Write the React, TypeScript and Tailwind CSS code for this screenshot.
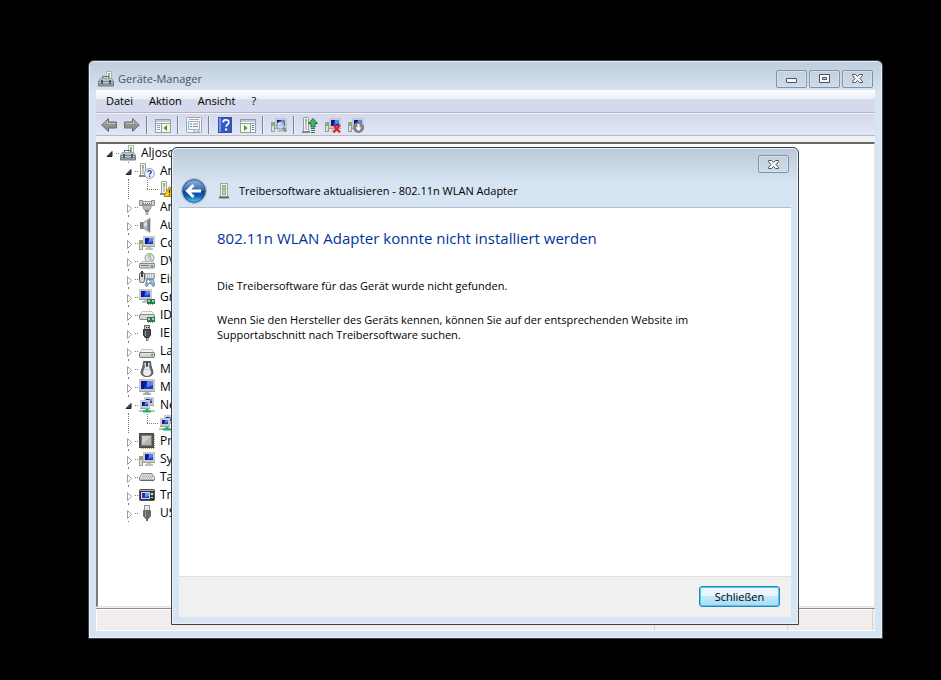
import type { ReactNode } from 'react';

type IconProps = { size?: number };
type IconComponent = (props: IconProps) => ReactNode;

function Icon({ size = 16, children }: { size?: number; children: ReactNode }) {
  return (
    <svg width={size} height={size} viewBox="0 0 16 16" className="shrink-0" aria-hidden="true">
      {children}
    </svg>
  );
}

/* ---------- shared icon parts ---------- */

function Tower({ x = 0, y = 0, h = 13 }: { x?: number; y?: number; h?: number }) {
  return (
    <g>
      <rect x={x + 1.5} y={y + 0.5} width="5" height={h - 1} rx="0.5" fill="#f4f4f1" stroke="#9c9e9a" />
      <rect x={x + 3} y={y + 2} width="2" height={h - 4} fill="#c3c7bf" />
      <rect x={x + 3} y={y + 2} width="2" height="3" fill="#84c46d" />
      <rect x={x} y={y + h - 1} width="8" height="2" fill="#85888a" />
    </g>
  );
}

function Screen({ x, y, w, h, frame = 1 }: { x: number; y: number; w: number; h: number; frame?: number }) {
  const left = x + frame;
  const top = y + frame;
  const iw = w - frame * 2;
  const ih = h - frame * 2 - 1;
  return (
    <g>
      <rect x={x} y={y} width={w} height={h} fill="#c9cac6" />
      <rect x={left} y={top} width={iw} height={ih} fill="#1a3fd0" />
      <path d={`M${left} ${top}h${iw / 2}l${-iw / 4} ${ih}h${-iw / 4}z`} fill="#0b1a9c" />
      <path d={`M${left + iw / 2} ${top}h${iw / 2}v${ih / 2}l${-iw / 2} ${ih / 4}z`} fill="#5c86ee" />
      <path d={`M${x} ${y + h - 0.5}h${w}`} stroke="#a1a29d" />
    </g>
  );
}

function SmallPc() {
  return (
    <g>
      <rect x="0.5" y="5.5" width="3" height="9" fill="#dfe0dc" stroke="#999c98" />
      <rect x="1" y="6" width="2" height="3" fill="#6cc550" />
      <Screen x={4} y={1} w={12} h={11} frame={2} />
      <path d="M8 12h4v1h2v2H6v-2h2z" fill="#c2c3bf" />
    </g>
  );
}

/* ---------- tree icons ---------- */

const ToolboxIcon: IconComponent = ({ size }) => (
  <Icon size={size}>
    <rect x="8.500" y="0.500" width="5" height="9" fill="#f7f7f4" stroke="#b1b3ae" />
    <rect x="10" y="2" width="2" height="5" fill="#7fc666" />
    <path d="M4.500 7V5.500h6V7" fill="none" stroke="#62686d" />
    <path d="M2 7.500h12l1.500 3H0.500z" fill="#b9c3ca" stroke="#87919a" strokeWidth="0.700" />
    <path d="M0.500 10.500h15v4.500h-15z" fill="#8d989f" stroke="#727c83" />
    <path d="M1 11.500h14" stroke="#ccd3d8" />
    <path d="M3 9h2v4H3zM11 9h2v4h-2z" fill="#4f5a62" />
  </Icon>
);

const UnknownIcon: IconComponent = ({ size }) => (
  <Icon size={size}>
    <Tower x={0} y={0} h={13} />
    <circle cx="10.500" cy="10.500" r="4.900" fill="#f2f7ff" stroke="#8795ad" />
    <path d="M8.800 9.300c0-2.300 3.500-2.200 3.500-.2 0 1.200-1.600 1.300-1.700 2.600" fill="none" stroke="#1d46b6" strokeWidth="1.300" />
    <rect x="10" y="12.500" width="1.400" height="1.400" fill="#1d46b6" />
  </Icon>
);

const WarningIcon: IconComponent = ({ size }) => (
  <Icon size={size}>
    <Tower x={1} y={0} h={13} />
    <path d="M10.500 5.500l5.500 10H5z" fill="#ffd824" stroke="#b48908" strokeLinejoin="round" />
    <path d="M10.500 8.500v3.500M10.500 13v1.500" stroke="#413300" strokeWidth="1.400" />
  </Icon>
);

const PortIcon: IconComponent = ({ size }) => (
  <Icon size={size}>
    <path d="M2.500 2.500h11v3h-11z" fill="#e8ebed" stroke="#8e959b" />
    <path d="M0.500 1.500h3v5h-3zM12.500 1.500h3v5h-3z" fill="#cdd2d6" stroke="#858c92" />
    <path d="M4 4.500h8" stroke="#6b7278" strokeDasharray="1 1" />
    <path d="M4 6.500h8v2L10.500 11h-5L4 8.500z" fill="#b7bfc4" stroke="#7c848a" strokeWidth="0.800" />
    <rect x="6" y="11" width="4" height="2" fill="#7b848b" />
    <rect x="6.500" y="13" width="3" height="3" fill="#aab0b5" />
  </Icon>
);

const SpeakerIcon: IconComponent = ({ size }) => (
  <Icon size={size}>
    <path d="M1.500 5.500h3v6h-3z" fill="#83888c" stroke="#74797e" />
    <path d="M4.500 5.500L11 1v14.500l-6.500-4z" fill="#b3b8bc" stroke="#94999d" strokeWidth="0.800" />
    <path d="M8.500 4L11 2v13l-2.500-2.500z" fill="#777d82" />
    <path d="M5 6.500l3-2v4l-3 1z" fill="#dde1e4" />
  </Icon>
);

const ComputerIcon: IconComponent = ({ size }) => (
  <Icon size={size}>
    <SmallPc />
  </Icon>
);

const DiscIcon: IconComponent = ({ size }) => (
  <Icon size={size}>
    <circle cx="10.500" cy="5" r="4.500" fill="#e3e8e6" stroke="#929996" />
    <path d="M10.500 5L8 1.500a4 4 0 015 0z" fill="#98d59a" />
    <path d="M10.500 5l3.500 1.500a4 4 0 01-3 2.500z" fill="#d7b6dd" />
    <circle cx="10.500" cy="5" r="1.300" fill="#fff" stroke="#868c8a" strokeWidth="0.700" />
    <path d="M3 8.500h11l1.500 2.500H0.500z" fill="#f0f1f0" stroke="#9a9d9b" strokeWidth="0.700" />
    <rect x="0.500" y="10.500" width="15" height="4.500" rx="1" fill="#cfd2d0" stroke="#838785" />
    <path d="M2 12.500h8" stroke="#777" />
    <rect x="12" y="12" width="2" height="2" fill="#43b52d" />
  </Icon>
);

const InputIcon: IconComponent = ({ size }) => (
  <Icon size={size}>
    <path d="M5 2.500h10.500v5H5z" fill="#e6e8ea" stroke="#9aa0a6" />
    <path d="M6 4h9M6 6h9" stroke="#6c737a" strokeWidth="0.700" strokeDasharray="1 1" />
    <rect x="0.500" y="1.500" width="5" height="10" rx="2" fill="#d6d9db" stroke="#596066" />
    <path d="M3 0v6" stroke="#3d444a" strokeWidth="2" />
    <path d="M7.500 8.500h7l1 6-1.500 1-2-3h-2l-2 3-1.500-1z" fill="#8eb4d4" stroke="#55728b" strokeWidth="0.800" />
    <path d="M8 10.500h3M9.500 9v3M13 10.500h1" stroke="#fff" strokeWidth="0.900" />
  </Icon>
);

const GraphicsIcon: IconComponent = ({ size }) => (
  <Icon size={size}>
    <Screen x={0} y={0} w={13} h={11} frame={2} />
    <path d="M5 11h4v1h2v2H3v-2h2z" fill="#c2c3bf" />
    <rect x="8" y="10" width="8" height="5" fill="#267b52" />
    <path d="M9 11h2v2H9zM13 11h2v2h-2z" fill="#a0d4b4" />
    <path d="M9 15.500h6" stroke="#b99c3a" strokeDasharray="1 1" />
  </Icon>
);

const IdeIcon: IconComponent = ({ size }) => (
  <Icon size={size}>
    <path d="M3 4.500h10l2.500 4H0.500z" fill="#f4f5f4" stroke="#b5b8b6" strokeWidth="0.800" />
    <rect x="0.500" y="7.500" width="15" height="5" rx="1.500" fill="#d6d8d7" stroke="#858987" />
    <rect x="8" y="10" width="8" height="5" fill="#267b52" />
    <path d="M9 11h2v2H9zM13 11h2v2h-2z" fill="#a0d4b4" />
    <path d="M9 15.500h6" stroke="#b99c3a" strokeDasharray="1 1" />
  </Icon>
);

const FirewireIcon: IconComponent = ({ size }) => (
  <Icon size={size}>
    <rect x="5.500" y="0.500" width="5" height="4" fill="#c3c5c7" stroke="#6b6d6f" />
    <path d="M7 2h1v1H7zM9 2h1v1H9z" fill="#222" />
    <path d="M4.500 4.500h7V10l-1.500 2.500H6L4.500 10z" fill="#4b4e50" stroke="#323537" />
    <path d="M6 6h1v5H6z" fill="#979b9e" />
    <path d="M7.500 13v3M9 13v3" stroke="#66696b" />
  </Icon>
);

const DriveIcon: IconComponent = ({ size }) => (
  <Icon size={size}>
    <path d="M3 6.500h10l2.500 3.500h-15z" fill="#f4f5f4" stroke="#b1b4b2" strokeWidth="0.800" />
    <rect x="0.500" y="9.500" width="15" height="5" rx="1.500" fill="#cfd1d0" stroke="#7b7f7d" />
    <path d="M2 11h12" stroke="#eee" />
    <rect x="12" y="11" width="2" height="2" fill="#43c22d" />
  </Icon>
);

const MouseIcon: IconComponent = ({ size }) => (
  <Icon size={size}>
    <path d="M4.500 0.500h7L12 5l2 6c0 3-2 4.500-6 4.500S2 14 2 11l2-6z" fill="#6a6e71" stroke="#55595c" />
    <path d="M5.500 2h5l-.5 4 2 5c0 2.500-1.500 4-4 4s-4-1.500-4-4l2-5z" fill="#e9ebec" />
    <rect x="7" y="1" width="2" height="5" rx="1" fill="#3b3f42" />
    <path d="M7 8.500h2" stroke="#b1b5b8" />
  </Icon>
);

const MonitorIcon: IconComponent = ({ size }) => (
  <Icon size={size}>
    <Screen x={0} y={0} w={16} h={13} frame={2} />
    <path d="M6 13h4v1h2v2H4v-2h2z" fill="#a9aca8" />
  </Icon>
);

const NetworkIcon: IconComponent = ({ size }) => (
  <Icon size={size}>
    <Screen x={5} y={0} w={10} h={9} frame={2} />
    <Screen x={1} y={3} w={10} h={9} frame={2} />
    <path d="M0 14h16" stroke="#b9c3bd" strokeWidth="2" />
    <path d="M6.500 12h3v1.500h2.500v2H4v-2h2.500z" fill="#12b175" />
  </Icon>
);

const ProcessorIcon: IconComponent = ({ size }) => (
  <Icon size={size}>
    <path d="M2 15.500h14M15.500 2v14" stroke="#c79d4a" strokeDasharray="1 1" />
    <rect x="0.500" y="0.500" width="14" height="14" fill="#525452" stroke="#4a4c4a" />
    <rect x="2.500" y="2.500" width="10" height="10" fill="#b4b6b4" stroke="#787b78" />
    <path d="M3 12V3h9z" fill="#cfd0ce" />
  </Icon>
);

const KeyboardIcon: IconComponent = ({ size }) => (
  <Icon size={size}>
    <path d="M3 4.500h10l2.500 4v2.500h-15V8.500z" fill="#e1e3e4" stroke="#868a8c" />
    <path d="M4 6h9M3 7.500h11M2 9h12" stroke="#8b8f92" strokeWidth="0.800" strokeDasharray="1 1" />
    <path d="M1 11.500h14" stroke="#64686a" />
  </Icon>
);

const PortableIcon: IconComponent = ({ size }) => (
  <Icon size={size}>
    <rect x="0.500" y="2.500" width="15" height="11" rx="1" fill="#2d3032" stroke="#505355" />
    <path d="M1 3.500h14" stroke="#b2b5b7" />
    <rect x="2.500" y="5.500" width="8" height="6" fill="#1534c4" stroke="#d8dcdd" />
    <path d="M6 6h4v3l-4 1.500z" fill="#6c95f1" />
    <circle cx="13" cy="7" r="1.300" fill="#d8dbdd" />
    <path d="M12 10.500h2" stroke="#d8dbdd" />
  </Icon>
);

const UsbIcon: IconComponent = ({ size }) => (
  <Icon size={size}>
    <rect x="5.500" y="0.500" width="5" height="5" fill="#e4e6e7" stroke="#909496" />
    <path d="M4.500 5.500h7V11l-2 2.500h-3l-2-2.500z" fill="#65696b" stroke="#6b6f71" />
    <path d="M6 6h1v6H6z" fill="#93979a" />
    <rect x="7" y="13" width="2" height="3" fill="#606466" />
  </Icon>
);

/* ---------- toolbar icons ---------- */

const BackArrowIcon: IconComponent = ({ size }) => (
  <Icon size={size}>
    <path d="M0.700 8L7.500 1.500v3.500H15.500v6H7.500v3.500z" fill="#919294" stroke="#68696b" strokeLinejoin="round" />
    <path d="M2.500 7.500l4-3.500v2.500h8" fill="none" stroke="#c3c4c6" />
  </Icon>
);

const ForwardArrowIcon: IconComponent = ({ size }) => (
  <Icon size={size}>
    <path d="M15.300 8L8.500 1.500v3.500H0.500v6H8.500v3.500z" fill="#919294" stroke="#707173" strokeLinejoin="round" />
    <path d="M1.500 6.500h8V4l4 3.500" fill="none" stroke="#c3c4c6" />
  </Icon>
);

const ConsoleTreeIcon: IconComponent = ({ size }) => (
  <Icon size={size}>
    <rect x="0.500" y="2.500" width="15" height="13" fill="#fbfbfb" stroke="#9a9ea4" />
    <path d="M1 4h14" stroke="#c5c9ce" strokeWidth="2" />
    <path d="M1 6.500h14M6.500 7v8" stroke="#9a9ea4" />
    <path d="M2 8.500h3M2 10.500h3M2 12.500h3" stroke="#7f9cc2" />
    <rect x="7" y="7" width="8" height="8" fill="#eef7ea" />
    <path d="M12 8v6l-3.500-3z" fill="#32a51f" />
  </Icon>
);

const PropertiesIcon: IconComponent = ({ size }) => (
  <Icon size={size}>
    <rect x="0.500" y="0.500" width="15" height="15" rx="1" fill="#fafafa" stroke="#a0a4aa" />
    <path d="M3 2.500h10" stroke="#a5abb3" />
    <path d="M2.500 4.500h11v8h-11z" fill="#f6f9fc" stroke="#a8aeb6" />
    <path d="M4 7h2M4 9.500h2" stroke="#16a0de" />
    <path d="M7 7h5M7 9.500h5" stroke="#848b94" />
    <path d="M7 14h3M11 14h3" stroke="#8f959d" />
  </Icon>
);

const HelpIcon: IconComponent = ({ size }) => (
  <Icon size={size}>
    <rect x="1.500" y="0.500" width="13" height="15" fill="#3059c7" stroke="#3450a0" />
    <path d="M3 1v14" stroke="#7797e6" strokeWidth="2" />
    <path d="M6.200 5.500c0-3.500 5.600-3.300 5.600-.2 0 2.200-2.600 2.200-2.700 4.500" fill="none" stroke="#fff" strokeWidth="1.800" />
    <rect x="8" y="11.500" width="2.200" height="2" fill="#fff" />
  </Icon>
);

const ActionPaneIcon: IconComponent = ({ size }) => (
  <Icon size={size}>
    <rect x="0.500" y="2.500" width="15" height="13" fill="#fbfbfb" stroke="#9a9ea4" />
    <path d="M1 4h14" stroke="#c5c9ce" strokeWidth="2" />
    <path d="M1 6.500h14M10.500 7v8" stroke="#9a9ea4" />
    <path d="M12 8.500h2M12 10.500h2M12 12.500h2" stroke="#3f719f" />
    <rect x="2" y="7" width="8" height="8" fill="#eef7ea" />
    <path d="M4 8v6l3.500-3z" fill="#32a51f" />
  </Icon>
);

const ScanIcon: IconComponent = ({ size }) => (
  <Icon size={size}>
    <SmallPc />
    <circle cx="9.500" cy="8.500" r="3.800" fill="#c4def4" fillOpacity="0.850" stroke="#8096ab" />
    <path d="M7.500 8a2 2 0 012-2" fill="none" stroke="#fff" />
    <path d="M12.300 11.300l3 3.200" stroke="#78828c" strokeWidth="2" />
  </Icon>
);

const UpdateDriverIcon: IconComponent = ({ size }) => (
  <Icon size={size}>
    <Tower x={0} y={0} h={15} />
    <path d="M11 1.500l4.500 5H13V10H9V6.500H6.500z" fill="#45b469" stroke="#176f36" strokeLinejoin="round" />
    <path d="M9 11.500h4M9 13.500h4M9 15.500h4" stroke="#248548" />
  </Icon>
);

const UninstallIcon: IconComponent = ({ size }) => (
  <Icon size={size}>
    <SmallPc />
    <path d="M8.500 8l6.500 7.500M15 8l-6.500 7.500" stroke="#e01b24" strokeWidth="2" />
  </Icon>
);

const DisableIcon: IconComponent = ({ size }) => (
  <Icon size={size}>
    <SmallPc />
    <circle cx="10.500" cy="10.500" r="5" fill="#85888b" stroke="#76797c" />
    <path d="M9.500 7h2v3.500h2l-3 3.500-3-3.500h2z" fill="#fff" />
  </Icon>
);

/* ---------- caption buttons ---------- */

const MinimizeGlyph = () => (
  <svg width="13" height="11" viewBox="0 0 13 11" aria-hidden="true">
    <rect x="1.500" y="5.500" width="10" height="4" rx="0.500" fill="#f8f8f8" stroke="#4e5260" />
  </svg>
);

const MaximizeGlyph = () => (
  <svg width="13" height="11" viewBox="0 0 13 11" aria-hidden="true">
    <path d="M1.500 1.500h10v8h-10zM4.500 4.500v2h4v-2z" fill="#f8f8f8" fillRule="evenodd" stroke="#4e5260" />
  </svg>
);

const CloseGlyph = () => (
  <svg width="13" height="11" viewBox="0 0 13 11" aria-hidden="true">
    <path
      d="M1.500 1.500h3L6.500 3.500l2-2h3v1L9 5.500l2.500 3v1h-3l-2-2-2 2h-3v-1L4 5.500l-2.500-3z"
      fill="#f8f8f8"
      stroke="#4e5260"
      strokeLinejoin="round"
    />
  </svg>
);

function CaptionButton({ label, children }: { label: string; children: ReactNode }) {
  return (
    <button
      type="button"
      aria-label={label}
      className="flex h-[18px] w-[31px] items-center justify-center rounded-xs border border-[#8391ad] bg-linear-to-b from-[#c4d1df] to-[#cddae8] shadow-[inset_0_0_0_1px_#d5e0eb]"
    >
      {children}
    </button>
  );
}

/* ---------- menu and toolbar ---------- */

const menus = ['Datei', 'Aktion', 'Ansicht', '?'];

type Tool = { label: string; icon: IconComponent };

const toolGroups: Tool[][] = [
  [
    { label: 'Zurück', icon: BackArrowIcon },
    { label: 'Vorwärts', icon: ForwardArrowIcon },
  ],
  [{ label: 'Konsolenstruktur', icon: ConsoleTreeIcon }],
  [{ label: 'Eigenschaften', icon: PropertiesIcon }],
  [
    { label: 'Hilfe', icon: HelpIcon },
    { label: 'Aktionsbereich', icon: ActionPaneIcon },
  ],
  [{ label: 'Nach geänderter Hardware suchen', icon: ScanIcon }],
  [
    { label: 'Treibersoftware aktualisieren', icon: UpdateDriverIcon },
    { label: 'Deinstallieren', icon: UninstallIcon },
    { label: 'Deaktivieren', icon: DisableIcon },
  ],
];

function Toolbar() {
  return (
    <div className="flex h-[22px] items-center border-b border-[#b3b8cf] bg-linear-to-b from-[#d3d8ec] to-[#e2e6f6] pl-px">
      {toolGroups.map((group, i) => (
        <div key={i} className="flex items-center">
          {i > 0 && <div className="mx-[3px] h-[18px] w-0.5 border-l border-[#7d8291] bg-[#eceffa]" />}
          {group.map(({ label, icon: ToolIcon }) => (
            <button key={label} type="button" aria-label={label} className="flex h-5 w-[23px] items-center justify-center">
              <ToolIcon />
            </button>
          ))}
        </div>
      ))}
    </div>
  );
}

/* ---------- device tree ---------- */

type Device = { name: string; icon: IconComponent; level: 0 | 1 | 2; open?: boolean };

const devices: Device[] = [
  { name: 'Aljosc', icon: ToolboxIcon, level: 0, open: true },
  { name: 'An', icon: UnknownIcon, level: 1, open: true },
  { name: '', icon: WarningIcon, level: 2 },
  { name: 'An', icon: PortIcon, level: 1 },
  { name: 'Au', icon: SpeakerIcon, level: 1 },
  { name: 'Co', icon: ComputerIcon, level: 1 },
  { name: 'DV', icon: DiscIcon, level: 1 },
  { name: 'Ein', icon: InputIcon, level: 1 },
  { name: 'Gr', icon: GraphicsIcon, level: 1 },
  { name: 'ID', icon: IdeIcon, level: 1 },
  { name: 'IEE', icon: FirewireIcon, level: 1 },
  { name: 'La', icon: DriveIcon, level: 1 },
  { name: 'Mä', icon: MouseIcon, level: 1 },
  { name: 'Mo', icon: MonitorIcon, level: 1 },
  { name: 'Ne', icon: NetworkIcon, level: 1, open: true },
  { name: '', icon: NetworkIcon, level: 2 },
  { name: 'Pr', icon: ProcessorIcon, level: 1 },
  { name: 'Sy', icon: ComputerIcon, level: 1 },
  { name: 'Ta', icon: KeyboardIcon, level: 1 },
  { name: 'Tr', icon: PortableIcon, level: 1 },
  { name: 'US', icon: UsbIcon, level: 1 },
];

// Dotted connector lines plus the expand arrow in front of an entry
function Guides({ level, open }: { level: Device['level']; open?: boolean }) {
  if (level === 2) {
    return (
      <svg width="38" height="18" className="shrink-0" aria-hidden="true">
        <path d="M7.500 0v18M26.500 0v9M26 9.500h11" fill="none" stroke="#777" strokeDasharray="1 1" />
      </svg>
    );
  }
  return (
    <svg width="18" height="18" className="shrink-0" aria-hidden="true">
      {level === 1 && <path d="M7.500 0v2M7.500 17v1" stroke="#777" strokeDasharray="1 1" />}
      <path d="M14 9.500h4" stroke="#777" strokeDasharray="1 1" />
      {open ? (
        <path d="M10 7.500v5H5z" fill="#404040" stroke="#262626" strokeLinejoin="round" />
      ) : (
        <path d="M6.500 6.500v8l4-4z" fill="#fff" stroke="#a0a0a0" strokeLinejoin="round" />
      )}
    </svg>
  );
}

function DeviceTree() {
  return (
    <ul className="min-h-0 flex-1 overflow-hidden border border-t-2 border-l-2 border-[#e3e3e3] border-t-[#696969] border-l-[#7c7c7c] bg-white text-[12px]">
      {devices.map(({ name, icon: DeviceIcon, level, open }, i) => (
        <li key={i} className={level === 0 ? 'flex h-[18px] items-center pl-1' : 'flex h-[18px] items-center pl-[23px]'}>
          <Guides level={level} open={open} />
          <DeviceIcon />
          {name && <span className="pb-0.5 pl-[5px] whitespace-nowrap">{name}</span>}
        </li>
      ))}
    </ul>
  );
}

/* ---------- windows ---------- */

function DeviceManager() {
  return (
    <main className="flex flex-1 flex-col overflow-hidden rounded-t-md border border-[#3e4247] bg-[#d7e4f2] bg-linear-to-b from-[#bfccd9] to-[#d7e4f2] to-[32px] px-[7px] pb-[7px] shadow-[inset_0_0_0_1px_#e9f1f9]">
      <header className="flex h-[29px] shrink-0 items-center pt-1.5 pl-0.5">
        <ToolboxIcon />
        <h1 className="pl-1 text-[#4c535b]">Geräte-Manager</h1>
        <div className="ml-auto flex gap-0.5 pr-0.5">
          <CaptionButton label="Minimieren">
            <MinimizeGlyph />
          </CaptionButton>
          <CaptionButton label="Maximieren">
            <MaximizeGlyph />
          </CaptionButton>
          <CaptionButton label="Schließen">
            <CloseGlyph />
          </CaptionButton>
        </div>
      </header>
      <div className="flex min-h-0 flex-1 flex-col bg-[#f0f0f0]">
        <nav className="flex h-[23px] shrink-0 items-center border-b border-[#b0b4bf] bg-linear-to-b from-white from-0% via-[#e9edf6] via-40% to-[#d4daec] to-45% pb-0.5 pl-0.5">
          {menus.map((menu) => (
            <button key={menu} type="button" className="px-2">
              {menu}
            </button>
          ))}
        </nav>
        <div className="h-px shrink-0 bg-[#f5f6fb]" />
        <Toolbar />
        <div className="flex min-h-0 flex-1 flex-col pt-1.5">
          <DeviceTree />
        </div>
        <footer className="mt-px flex h-[23px] shrink-0 border-b border-t border-b-white border-t-[#8b8b8b] bg-[#f1edec] shadow-[inset_1px_1px_0_#fff]">
          <div className="flex-1 border-r border-[#d8d3d2]" />
          <div className="w-[133px] border-r border-[#d8d3d2]" />
          <div className="w-[85px] border-r border-[#d8d3d2]" />
          <div className="w-0.5" />
        </footer>
      </div>
    </main>
  );
}

function BackButton() {
  return (
    <button type="button" aria-label="Zurück" className="shrink-0">
      <svg width="26" height="26" viewBox="0 0 26 26" aria-hidden="true">
        <defs>
          <linearGradient id="orb" x1="0" y1="0" x2="0" y2="1">
            <stop offset="0" stopColor="#94b3dd" />
            <stop offset="0.480" stopColor="#3464b4" />
            <stop offset="0.500" stopColor="#0c3b91" />
            <stop offset="0.750" stopColor="#1366b4" />
            <stop offset="1" stopColor="#4bdcfa" />
          </linearGradient>
        </defs>
        <circle cx="13" cy="13" r="12.500" fill="#e4edf6" stroke="#a4b2c5" />
        <circle cx="13" cy="13" r="11.300" fill="url(#orb)" stroke="#274a83" />
        <path d="M12.500 7L6.500 13l6 6M7.500 13H20" fill="none" stroke="#fff" strokeWidth="3" />
      </svg>
    </button>
  );
}

function UpdateDialog() {
  return (
    <section
      role="dialog"
      aria-labelledby="wizard-title"
      className="absolute top-[147px] right-[142px] bottom-[55px] left-[171px] flex flex-col overflow-hidden rounded-t-md border border-[#3e4247] bg-[#d7e4f2] bg-linear-to-b from-[#bccad8] to-[#d7e4f2] to-[36px] px-[7px] pb-[7px] shadow-[inset_0_0_0_1px_#e9f1f9]"
    >
      <div className="flex shrink-0 justify-end pt-[7px] pr-0.5">
        <CaptionButton label="Schließen">
          <CloseGlyph />
        </CaptionButton>
      </div>
      <header className="flex h-[35px] shrink-0 items-center border-b border-[#b2bfce] pt-px pl-0.5">
        <BackButton />
        <div className="pl-2.5">
          <svg width="14" height="16" viewBox="0 0 14 16" aria-hidden="true">
            <rect x="3.500" y="0.500" width="7" height="13" fill="#f3f3f0" stroke="#a2a5a2" />
            <rect x="5.500" y="2.500" width="3" height="9" fill="#c9ccc7" stroke="#a0a39e" />
            <path d="M7 3v5" stroke="#78c65e" />
            <path d="M2 14.500h10" stroke="#6d706e" strokeWidth="2" />
          </svg>
        </div>
        <h2 id="wizard-title" className="pl-2">
          Treibersoftware aktualisieren - 802.11n WLAN Adapter
        </h2>
      </header>
      <div className="min-h-0 flex-1 overflow-hidden bg-white px-[38px] pt-[19px]">
        <h3 className="text-[15px] leading-[22px] text-[#003399]">802.11n WLAN Adapter konnte nicht installiert werden</h3>
        <p className="pt-[29px]">Die Treibersoftware für das Gerät wurde nicht gefunden.</p>
        <p className="max-w-[500px] pt-[19px]">
          Wenn Sie den Hersteller des Geräts kennen, können Sie auf der entsprechenden Website im Supportabschnitt nach Treibersoftware suchen.
        </p>
      </div>
      <footer className="flex h-[41px] shrink-0 items-center justify-end border-t border-[#dfdfdf] bg-[#f0f0f0] pr-[11px] pb-px">
        <button
          type="button"
          className="h-[21px] w-[81px] rounded-[3px] border border-[#3c7fb1] bg-linear-to-b from-[#e9f6fd] from-50% via-[#c6e7f9] via-50% to-[#a9dbf5] pb-px shadow-[inset_0_0_0_1px_#38d0f8]"
        >
          Schließen
        </button>
      </footer>
    </section>
  );
}

export default function App() {
  return (
    <div className="relative flex min-h-screen flex-col bg-black font-['Open_Sans','Noto_Sans',sans-serif] text-[11px] leading-[15px] text-black">
      <div className="flex h-screen flex-col pt-[60px] pr-[58px] pb-[41px] pl-[88px]">
        <DeviceManager />
      </div>
      <UpdateDialog />
    </div>
  );
}
